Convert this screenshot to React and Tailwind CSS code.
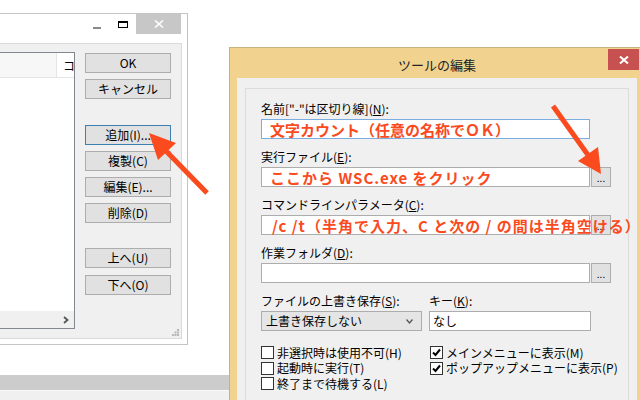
import React from "react";

const ui = "font-['Noto_Sans_CJK_JP','Noto_Sans',sans-serif]";

const Btn = ({ children, focus, className = "" }) => (
  <div
    className={`h-[20px] w-[86px] flex items-center justify-center border bg-[#e1e1e1] text-[12px] leading-none text-black ${
      focus ? "border-[#3c7fb1]" : "border-[#adadad]"
    } ${className}`}
  >
    {children}
  </div>
);

const Label = ({ children, className = "" }) => (
  <div className={`h-[16px] leading-[16px] text-[12px] text-black whitespace-nowrap ${className}`}>{children}</div>
);

const Note = ({ children, className = "" }) => (
  <span className={`relative z-10 whitespace-nowrap text-[15px] font-bold leading-none text-[#fa4a1e] ${className}`}>
    {children}
  </span>
);

const Field = ({ children, focus, browse }) => (
  <div className="mt-[2px] flex">
    <div
      className={`w-[329px] h-[20px] bg-white border flex items-center pl-[8px] ${
        focus ? "border-[#7aaee0]" : "border-[#adadad]"
      }`}
    >
      {children}
    </div>
    {browse && (
      <div className="ml-[1px] w-[20px] h-[20px] border border-[#adadad] bg-[#e1e1e1] flex items-end justify-center pb-[3px] text-[10px] leading-none">
        ...
      </div>
    )}
  </div>
);

const Check = ({ checked, children }) => (
  <div className="h-[15.5px] flex items-center">
    <div className="w-[13px] h-[13px] border border-[#333] bg-white flex items-center justify-center">
      {checked && (
        <svg width="9" height="9" viewBox="0 0 9 9">
          <path d="M1 4.5 L3.5 7 L8 1.5" stroke="#000" strokeWidth="2" fill="none" />
        </svg>
      )}
    </div>
    <span className="ml-[3px] text-[12px] leading-none text-black whitespace-nowrap">{children}</span>
  </div>
);

export default function App() {
  return (
    <div className={`relative w-[640px] h-[400px] overflow-hidden bg-white ${ui}`}>
      {/* back window strip */}
      <div className="absolute left-0 top-[375px] w-[229px] h-[25px] flex flex-col">
        <div className="h-[15px] bg-[#cccccc]" />
        <div className="flex-1 bg-[#f0f0f0] border-t border-[#fafafa]" />
      </div>

      {/* left dialog */}
      <div className="absolute left-[-150px] top-[13px] w-[338px] h-[332px] border border-[#c4c4c4] bg-white flex flex-col">
        <div className="h-[29px] flex justify-end pr-[6px]">
          <div className="w-[25px] h-[20px] flex justify-center pt-[13px]">
            <div className="w-[8px] h-[2px] bg-[#8a8a8a]" />
          </div>
          <div className="w-[27px] h-[20px] flex justify-center pt-[7px]">
            <div className="w-[10px] h-[7px] border border-t-2 border-black" />
          </div>
          <div className="w-[45px] h-[20px] bg-[#c7c7c7] flex items-center justify-center">
            <svg width="10" height="8" viewBox="0 0 10 8">
              <path d="M1 0.5 L9 7.5 M9 0.5 L1 7.5" stroke="#fff" strokeWidth="1.6" />
            </svg>
          </div>
        </div>
        <div className="relative mx-[5px] mb-[5px] flex-1 border border-[#dadada] bg-[#f0f0f0] flex pt-[8px] pb-[9px] pl-[10px] pr-[10px]">
          <div className="flex-1 border border-[#828790] bg-white flex flex-col">
            <div className="h-[25px] flex border-b border-[#e5e5e5]">
              <div className="flex-1 bg-[#f7f7f7] border-r border-[#e5e5e5]" />
              <div className="w-[17px] overflow-hidden pl-[6px] text-[12px] leading-[25px] text-black">コ</div>
            </div>
            <div className="flex-1" />
            <div className="h-[17px] bg-[#f0f0f0] flex justify-end items-center pr-[5px]">
              <svg width="6" height="8" viewBox="0 0 6 8">
                <path d="M1 1 L4.5 4 L1 7" stroke="#555" strokeWidth="1.8" fill="none" />
              </svg>
            </div>
          </div>
          <div className="ml-[10px] flex flex-col pt-[1px]">
            <Btn>OK</Btn>
            <Btn className="mt-[6px]">キャンセル</Btn>
            <Btn focus className="mt-[26px]">追加(I)...</Btn>
            <Btn className="mt-[6px]">複製(C)</Btn>
            <Btn className="mt-[6px]">編集(E)...</Btn>
            <Btn className="mt-[6px]">削除(D)</Btn>
            <Btn className="mt-[25px]">上へ(U)</Btn>
            <Btn className="mt-[7px]">下へ(O)</Btn>
          </div>
          <svg className="absolute right-[2px] bottom-[2px]" width="7" height="7" viewBox="0 0 7 7">
            <rect x="5" y="0" width="2" height="2" fill="#b8b8b8" />
            <rect x="2.5" y="2.5" width="2" height="2" fill="#b8b8b8" />
            <rect x="5" y="2.5" width="2" height="2" fill="#b8b8b8" />
            <rect x="0" y="5" width="2" height="2" fill="#b8b8b8" />
            <rect x="2.5" y="5" width="2" height="2" fill="#b8b8b8" />
            <rect x="5" y="5" width="2" height="2" fill="#b8b8b8" />
          </svg>
        </div>
      </div>

      {/* right dialog */}
      <div className="absolute left-[229px] top-[47px] w-[416px] h-[360px] border border-[#c6b27e] bg-[#f1d38f] flex flex-col">
        <div className="h-[30px] grid grid-cols-[36px_1fr_36px]">
          <div />
          <div className="flex items-center justify-center pt-[3px] text-[13px] text-[#222]">ツールの編集</div>
          <div className="pt-[1px]">
            <div className="w-[31px] h-[21px] bg-[#c75050] flex items-center justify-center">
              <svg width="10" height="8" viewBox="0 0 10 8">
                <path d="M1 0.5 L9 7.5 M9 0.5 L1 7.5" stroke="#fff" strokeWidth="2" />
              </svg>
            </div>
          </div>
        </div>
        <div className="mx-[7px] flex-1 bg-[#f0f0f0] pt-[10px] px-[8px]">
          <div className="h-full border border-[#dcdcdc] pt-[12px] pl-[15px]">
            <Label>
              名前["-"は区切り線](<u>N</u>):
            </Label>
            <Field focus>
              <Note>文字カウント（任意の名称でＯＫ）</Note>
            </Field>

            <Label className="mt-[10px]">
              実行ファイル(<u>E</u>):
            </Label>
            <Field browse>
              <Note className="tracking-[1px]">ここから WSC.exe をクリック</Note>
            </Field>

            <Label className="mt-[10px]">
              コマンドラインパラメータ(<u>C</u>):
            </Label>
            <Field browse>
              <Note className="tracking-[1px] pl-[2px]">/c /t（半角で入力、C と次の / の間は半角空ける）</Note>
            </Field>

            <Label className="mt-[10px]">
              作業フォルダ(<u>D</u>):
            </Label>
            <Field browse />

            <div className="mt-[10px] flex">
              <div className="w-[168px]">
                <Label>
                  ファイルの上書き保存(<u>S</u>):
                </Label>
                <div className="mt-[2px] w-[161px] h-[20px] border border-[#acacac] bg-[#e5e5e5] flex items-center justify-between pl-[4px] pr-[8px]">
                  <span className="text-[12px] leading-none text-black">上書き保存しない</span>
                  <svg width="7" height="5" viewBox="0 0 7 5">
                    <path d="M0.5 0.5 L3.5 4 L6.5 0.5" stroke="#555" strokeWidth="1.3" fill="none" />
                  </svg>
                </div>
              </div>
              <div>
                <Label>
                  キー(<u>K</u>):
                </Label>
                <div className="mt-[2px] w-[162px] h-[20px] border border-[#adadad] bg-white flex items-center pl-[3px] text-[12px] leading-none text-black">
                  なし
                </div>
              </div>
            </div>

            <div className="mt-[14px] grid grid-cols-[169px_1fr]">
              <div>
                <Check>非選択時は使用不可(H)</Check>
                <Check>起動時に実行(T)</Check>
                <Check>終了まで待機する(L)</Check>
              </div>
              <div>
                <Check checked>メインメニューに表示(M)</Check>
                <Check checked>ポップアップメニューに表示(P)</Check>
              </div>
            </div>
          </div>
        </div>
      </div>

      {/* annotation arrows */}
      <svg className="absolute inset-0 pointer-events-none" width="640" height="400" viewBox="0 0 640 400">
        <line x1="207" y1="193" x2="165" y2="150" stroke="#fa4a1e" strokeWidth="5" />
        <polygon points="149,133 158,160 176,143" fill="#fa4a1e" />
        <line x1="553" y1="106" x2="588" y2="155" stroke="#fa4a1e" strokeWidth="5" />
        <polygon points="601,174 598,147 578,161" fill="#fa4a1e" />
      </svg>
    </div>
  );
}
